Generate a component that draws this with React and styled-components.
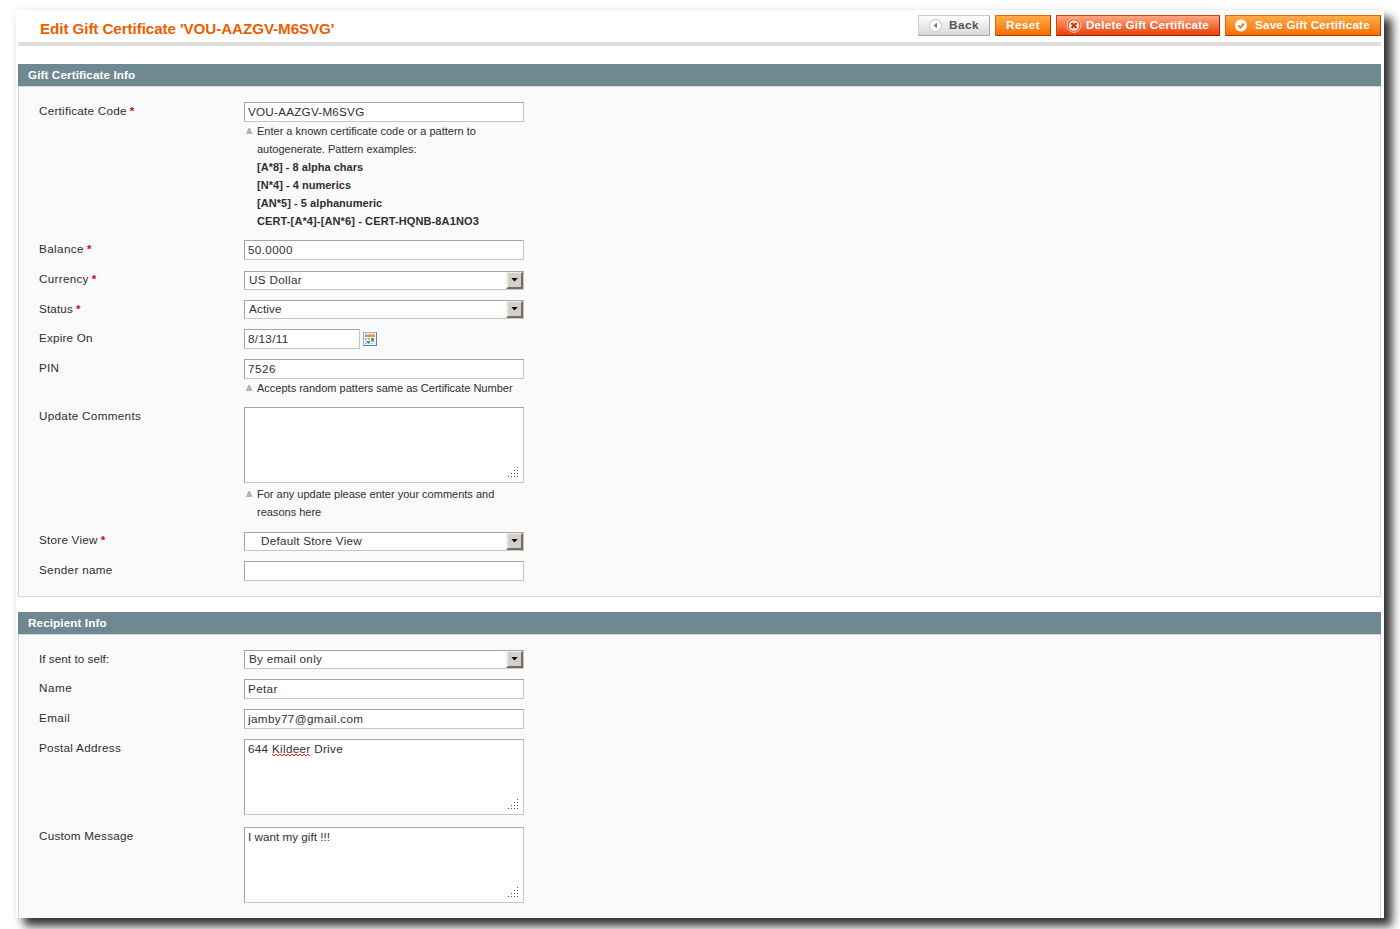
import React from 'react';
import styled, {createGlobalStyle, css} from 'styled-components';

const GlobalStyle = createGlobalStyle`
    *, *::before, *::after { box-sizing: border-box; }
    html, body {
        margin: 0;
        background: #fff;
        overflow: hidden;
    }
    body {
        font: 11.7px/18px "Liberation Sans", Arial, Helvetica, sans-serif;
        color: #2f2f2f;
    }
`;

// base tracking of the form text, plus a small correction per string
const track = p => (.14 + (p.$ls || 0)).toFixed(2);

const Page = styled.div`
    height: 929px;
    padding: 10px 16px 11px;
    overflow: hidden;
`;

const Window = styled.main`
    height: 908px;
    padding: 0 3px 0 2px;
    background: #fff;
    box-shadow: 8px 8px 9px rgba(0, 0, 0, .8), 0 0 9px rgba(0, 0, 0, .07);
`;

const Header = styled.header`
    display: flex;
    justify-content: space-between;
    height: 36px;
    margin-bottom: 18px;
    border-bottom: 4px solid #dfdfdf;
`;

const Title = styled.h1`
    margin: 0;
    padding: 10px 0 0 22px;
    font-size: 15.2px;
    line-height: 18px;
    letter-spacing: -.08px;
    color: #eb5e00;
`;

const Buttons = styled.div`
    display: flex;
    gap: 5px;
    padding-top: 5px;
`;

const tones = {
    back: css`
        color: #555;
        border-color: #ccc #aaa #aaa #ccc;
        background: linear-gradient(#fff, #d8d8d8);
    `,
    normal: css`
        color: #fff;
        border-color: #ed6502 #a04300 #a04300 #ed6502;
        background: linear-gradient(#ffac47, #f96e04);
    `,
    remove: css`
        color: #fff;
        border-color: #d24403 #a92000 #a92000 #d24403;
        background: linear-gradient(#ffa780, #e93f07);
    `,
};

const Button = styled.button`
    display: flex;
    align-items: flex-start;
    width: ${p => p.$width}px;
    height: 21px;
    padding: 0 0 0 ${p => p.$pad || 9}px;
    border: 1px solid;
    font: bold 11.7px/18px "Liberation Sans", Arial, sans-serif;
    letter-spacing: ${track}px;
    white-space: nowrap;
    ${p => tones[p.$tone]}
`;

const ButtonIcon = styled.svg`
    flex: none;
    width: 16px;
    height: 16px;
    margin: 1px 4px 0 0;
`;

const Section = styled.section`
    margin-bottom: 15px;
`;

const SectionTitle = styled.h2`
    height: 22px;
    margin: 0;
    padding-left: 10px;
    background: #6f8992;
    color: #fff;
    font-size: 11.7px;
    line-height: 22px;
    letter-spacing: .1px;
`;

const Fieldset = styled.div`
    display: flex;
    flex-direction: column;
    gap: 10px;
    height: ${p => p.$height}px;
    padding: 15px 20px 0;
    border: 1px solid #d6d6d6;
    ${p => p.$open && 'border-bottom: 0;'}
    background: #fafafa;
`;

const Row = styled.div`
    display: flex;
    margin-top: ${p => p.$offset || 0}px;
`;

const Label = styled.label`
    width: 205px;
    line-height: 18px;
    letter-spacing: ${track}px;
`;

const Required = styled.span`
    margin-left: 3px;
    color: #d40707;
    font-weight: bold;
    letter-spacing: 0;
`;

const Value = styled.div`
    width: 280px;
`;

const field = css`
    border: 1px solid;
    border-color: #a5a5a5 #c6c6c6 #c6c6c6 #a5a5a5;
    background: #fff;
    letter-spacing: ${track}px;
`;

const Input = styled.div`
    ${field}
    width: ${p => p.$width || 280}px;
    height: 20px;
    padding-left: 3px;
    line-height: 18px;
`;

const SelectBox = styled.div`
    ${field}
    display: flex;
    justify-content: space-between;
    height: 19px;
    margin-top: ${p => p.$drop || 0}px;
    padding-left: ${p => p.$indent ? 16 : 4}px;
    line-height: 16px;
`;

const Arrow = styled.span`
    display: flex;
    justify-content: center;
    width: 17px;
    height: 17px;
    padding-top: 5px;
    border: solid;
    border-width: 1px 2px 2px 2px;
    border-color: #efeeea #716f64 #716f64 #efeeea;
    background: #d4d0c8;
`;

const Textarea = styled.div`
    ${field}
    position: relative;
    height: 76px;
    padding-left: 3px;
`;

const Grip = styled.svg`
    position: absolute;
    right: 5px;
    bottom: 5px;
`;

const Misspelled = styled.span`
    position: relative;
`;

const Squiggle = styled.svg`
    position: absolute;
    left: 0;
    top: 11px;
`;

const DateField = styled.div`
    display: flex;
    gap: 3px;
`;

const CalendarIcon = styled.svg`
    margin-top: 3px;
`;

const Note = styled.div`
    display: flex;
    padding-left: 2px;
    font-size: 11px;
    line-height: 18px;
    white-space: nowrap;

    svg { flex: none; margin: 6px 4px 0 0; }
`;

const Pattern = styled.strong`
    display: block;
    letter-spacing: ${p => p.$ls}px;
`;

const Select = ({children, ...rest}) => (
    <SelectBox {...rest}>
        <span>{children}</span>
        <Arrow>
            <svg width="7" height="4" viewBox="0 0 7 4">
                <path d="M.3 0h6.4L3.5 3.6z" fill="#000"/>
            </svg>
        </Arrow>
    </SelectBox>
);

const ResizeGrip = () => (
    <Grip width="10" height="10" viewBox="0 0 10 10" shapeRendering="crispEdges">
        <path
            d="M9 0h1v1h-1zM6 3h1v1h-1zM9 3h1v1h-1zM3 6h1v1h-1zM6 6h1v1h-1zM9 6h1v1h-1zM0 9h1v1h-1zM3 9h1v1h-1zM6 9h1v1h-1zM9 9h1v1h-1z"
            fill="#555"
        />
    </Grip>
);

const Hint = ({children}) => (
    <Note>
        <svg width="7" height="6" viewBox="0 0 7 6"><path d="M2.5 0h1.4L6.6 6H-.2z" fill="#a9b9be"/></svg>
        <div>{children}</div>
    </Note>
);

const FormRow = ({label, ls, required, offset, children}) => (
    <Row $offset={offset}>
        <Label $ls={ls}>
            {label}
            {required && <Required>*</Required>}
        </Label>
        <Value>{children}</Value>
    </Row>
);

const Calendar = () => (
    <CalendarIcon width="14" height="14" viewBox="0 0 14 14" shapeRendering="crispEdges">
        <path d="M0 0h14v14H0z" fill="#4d86ce"/>
        <path d="M0 0h13v1H1v12H0z" fill="#86b1e4"/>
        <path d="M1 1h12v12H1z" fill="#eef4fc"/>
        <path d="M2 2h10v3H2z" fill="#f58a42"/>
        <path d="M2 2h10v1H2z" fill="#fbb178"/>
        <path d="M2 6h9v6H2z" fill="#9fb6e0"/>
        <path d="M4 6h1v6H4zM7 6h1v6H7zM2 8h9v1H2zM2 10h9v1H2z" fill="#fff"/>
        <path d="M8 6h3v3H8zM4 9h3v2H4z" fill="#56a352"/>
        <path d="M9 12v-2h3v2z" fill="#dce8f8"/>
    </CalendarIcon>
);

const App = () => (
    <>
        <GlobalStyle/>
        <Page>
            <Window>
                <Header>
                    <Title>Edit Gift Certificate 'VOU-AAZGV-M6SVG'</Title>
                    <Buttons>
                        <Button $tone="back" $width={72} $pad={10} $ls={.35}>
                            <ButtonIcon viewBox="0 0 16 16">
                                <circle cx="6.5" cy="8.5" r="6" fill="#fff" stroke="#c4c4c4"/>
                                <path d="M8 5.8v5.4L4.6 8.5z" fill="#777"/>
                            </ButtonIcon>
                            Back
                        </Button>
                        <Button $tone="normal" $width={56} $pad={10} $ls={.3}>Reset</Button>
                        <Button $tone="remove" $width={164} $ls={.04}>
                            <ButtonIcon viewBox="0 0 16 16">
                                <circle cx="8" cy="8.5" r="6.9" fill="#e0582b" stroke="#fbd0bd" strokeWidth="1"/>
                                <circle cx="8" cy="8.5" r="5.3" fill="#fde3d8"/>
                                <path d="M5.5 6l5 5M10.5 6l-5 5" stroke="#cf3a0c" strokeWidth="2.3"/>
                            </ButtonIcon>
                            Delete Gift Certificate
                        </Button>
                        <Button $tone="normal" $width={156} $ls={.04}>
                            <ButtonIcon viewBox="0 0 16 16">
                                <circle cx="6" cy="8.5" r="6" fill="#fff"/>
                                <path d="M3.2 8.4l2.2 2.1 3.5-4" fill="none" stroke="#ee7d28" strokeWidth="2"/>
                            </ButtonIcon>
                            Save Gift Certificate
                        </Button>
                    </Buttons>
                </Header>

                <Section>
                    <SectionTitle>Gift Certificate Info</SectionTitle>
                    <Fieldset $height={511}>
                        <FormRow label="Certificate Code" ls={.11} required>
                            <Input $ls={.09}>VOU-AAZGV-M6SVG</Input>
                            <Hint>
                                Enter a known certificate code or a pattern to<br/>
                                autogenerate. Pattern examples:
                                <Pattern $ls={.02}>[A*8] - 8 alpha chars</Pattern>
                                <Pattern $ls={.03}>[N*4] - 4 numerics</Pattern>
                                <Pattern $ls={.05}>[AN*5] - 5 alphanumeric</Pattern>
                                <Pattern $ls={.12}>CERT-[A*4]-[AN*6] - CERT-HQNB-8A1NO3</Pattern>
                            </Hint>
                        </FormRow>
                        <FormRow label="Balance" ls={.25} required>
                            <Input $ls={.22}>50.0000</Input>
                        </FormRow>
                        <FormRow label="Currency" ls={.15} required>
                            <Select $ls={.2} $drop={1}>US Dollar</Select>
                        </FormRow>
                        <FormRow label="Status" required>
                            <Select>Active</Select>
                        </FormRow>
                        <FormRow label="Expire On" ls={.05}>
                            <DateField>
                                <Input $width={116} $ls={.22}>8/13/11</Input>
                                <Calendar/>
                            </DateField>
                        </FormRow>
                        <FormRow label="PIN" ls={.1}>
                            <Input $ls={.32}>7526</Input>
                            <Hint>Accepts random patters same as Certificate Number</Hint>
                        </FormRow>
                        <FormRow label="Update Comments" ls={.17}>
                            <Textarea><ResizeGrip/></Textarea>
                            <Row $offset={2}>
                                <Hint>
                                    For any update please enter your comments and<br/>
                                    reasons here
                                </Hint>
                            </Row>
                        </FormRow>
                        <FormRow label="Store View" ls={.1} required>
                            <Select $ls={.1} $indent $drop={1}>Default Store View</Select>
                        </FormRow>
                        <FormRow label="Sender name" ls={.18}>
                            <Input/>
                        </FormRow>
                    </Fieldset>
                </Section>

                <Section>
                    <SectionTitle>Recipient Info</SectionTitle>
                    <Fieldset $height={284} $open>
                        <FormRow label="If sent to self:" ls={-.1}>
                            <Select $ls={.14}>By email only</Select>
                        </FormRow>
                        <FormRow label="Name" ls={.35}>
                            <Input $ls={.2}>Petar</Input>
                        </FormRow>
                        <FormRow label="Email" ls={.25}>
                            <Input $ls={.22}>jamby77@gmail.com</Input>
                        </FormRow>
                        <FormRow label="Postal Address" ls={.15}>
                            <Textarea $ls={.17}>
                                644{' '}
                                <Misspelled>
                                    Kildeer
                                    <Squiggle width="39" height="4" viewBox="0 0 39 4">
                                        <path
                                            d="M0 1l2 2 2-2 2 2 2-2 2 2 2-2 2 2 2-2 2 2 2-2 2 2 2-2 2 2 2-2 2 2 2-2 2 2 2-2 2 2"
                                            fill="none" stroke="#f00" strokeWidth=".9"
                                        />
                                    </Squiggle>
                                </Misspelled>
                                {' '}Drive
                                <ResizeGrip/>
                            </Textarea>
                        </FormRow>
                        <FormRow label="Custom Message" ls={.12} offset={2}>
                            <Textarea $ls={-.13}>
                                I want my gift !!!
                                <ResizeGrip/>
                            </Textarea>
                        </FormRow>
                    </Fieldset>
                </Section>
            </Window>
        </Page>
    </>
);

export default App;
